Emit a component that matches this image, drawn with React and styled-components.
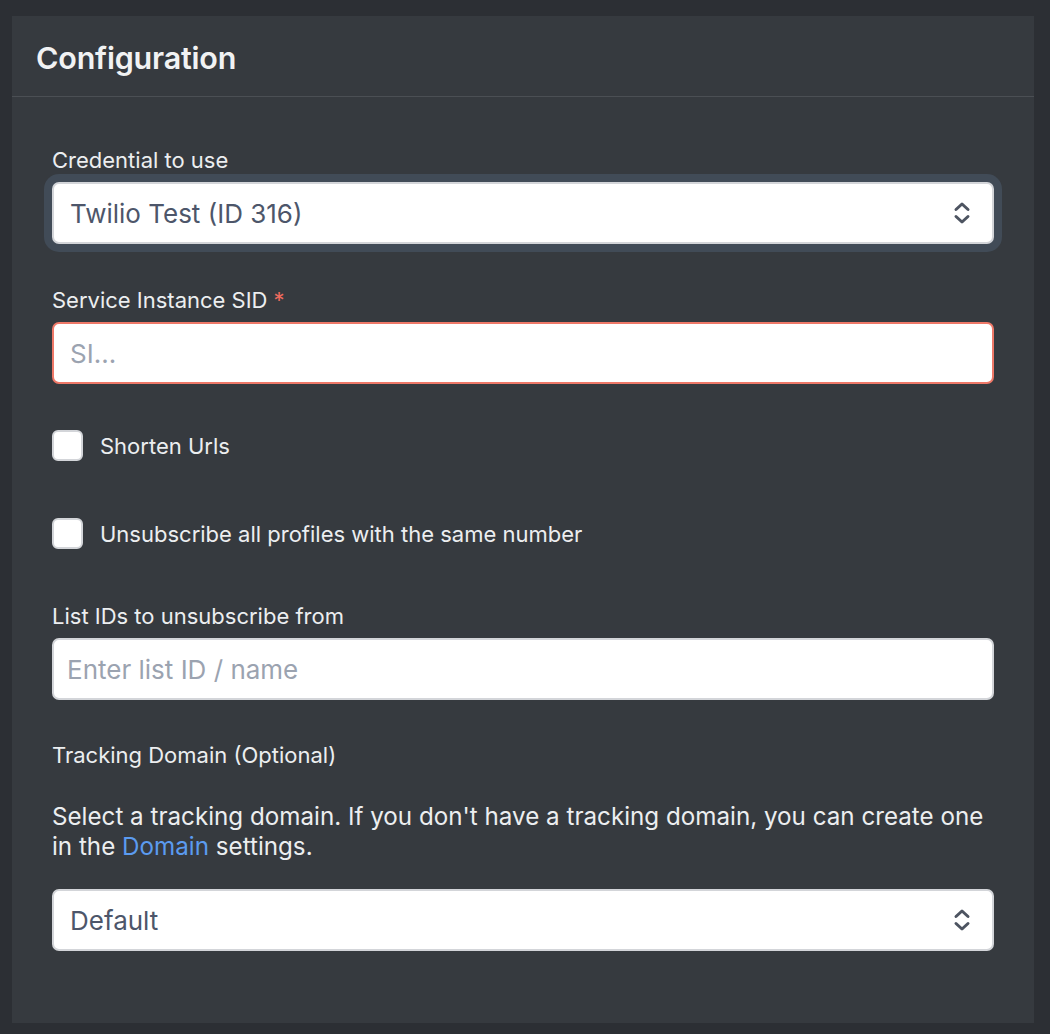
import React from "react";
import styled, { createGlobalStyle } from "styled-components";

const GlobalStyle = createGlobalStyle`
  *, *::before, *::after { box-sizing: border-box; }
  html, body { margin: 0; padding: 0; }
  body {
    background: #2c2f34;
    font-family: Inter, "Open Sans", "Liberation Sans", sans-serif;
    -webkit-font-smoothing: antialiased;
  }
`;

const Page = styled.div`
  padding: 16px 16px 11px 12px;
`;

const Card = styled.section`
  background: #363a3f;
  width: 1022px;
  min-height: 1007px;
`;

const Header = styled.header`
  height: 81px;
  display: flex;
  align-items: center;
  padding: 0 24px;
  border-bottom: 1px solid #4b4f54;
`;

const Title = styled.h2`
  margin: 0;
  color: #f1f2f3;
  font-size: 30.5px;
  font-weight: 600;
  letter-spacing: -0.2px;
  padding-top: 2px;
`;

const Body = styled.div`
  padding: 49px 40px 72px;
`;

const Group = styled.div`
  margin-bottom: ${(p) => p.$mb ?? 42}px;
`;

const Label = styled.label`
  display: block;
  color: #eceef0;
  font-size: 22px;
  line-height: 28px;
  margin-bottom: 8px;
`;

const Required = styled.span`
  color: #ef6b5e;
  margin-left: 6px;
`;

const Field = styled.div`
  position: relative;
  height: 62px;
  background: #fff;
  border: 2px solid ${(p) => (p.$error ? "#ee7868" : "#d3d5d9")};
  border-radius: 7px;
  display: flex;
  align-items: center;
  padding: 0 ${(p) => (p.$select ? 16 : 13)}px;
  box-shadow: ${(p) => (p.$focus ? "0 0 0 8px #414b57" : "none")};
  color: ${(p) => (p.$placeholder ? "#9ba3b0" : "#4d566a")};
  font-size: 26px;
`;

const Value = styled.span`
  flex: 1;
`;

const Chevrons = styled.svg`
  width: 20px;
  height: 26px;
  margin-right: 4px;
`;

const CheckRow = styled.div`
  display: flex;
  align-items: center;
  gap: 17px;
  margin-bottom: ${(p) => p.$mb}px;
`;

const Box = styled.span`
  width: 31px;
  height: 31px;
  border-radius: 6px;
  background: #fff;
  border: 2px solid #d3d5d9;
  flex-shrink: 0;
`;

const CheckText = styled.span`
  color: #eceef0;
  font-size: 22px;
`;

const Help = styled.p`
  margin: 33px 0 27px;
  color: #eceef0;
  font-size: 24.2px;
  line-height: 30px;
`;

const Link = styled.a`
  display: inline-block;
  line-height: 30px;
  color: #5b9bf0;
  text-decoration: none;
`;

function UpDown() {
  return (
    <Chevrons viewBox="0 0 20 26" fill="none" stroke="#4d5461" strokeWidth="3" strokeLinecap="round" strokeLinejoin="round">
      <path d="M4 9.5l6-5.5 6 5.5" />
      <path d="M4 16.5l6 5.5 6-5.5" />
    </Chevrons>
  );
}

function App() {
  return (
    <Page>
      <GlobalStyle />
      <Card>
        <Header>
          <Title>Configuration</Title>
        </Header>
        <Body>
          <Group>
            <Label>Credential to use</Label>
            <Field $select $focus>
              <Value>Twilio Test (ID 316)</Value>
              <UpDown />
            </Field>
          </Group>

          <Group $mb={46}>
            <Label>
              Service Instance SID<Required>*</Required>
            </Label>
            <Field $error $placeholder $select>
              <Value>SI...</Value>
            </Field>
          </Group>

          <CheckRow $mb={57}>
            <Box />
            <CheckText>Shorten Urls</CheckText>
          </CheckRow>
          <CheckRow $mb={53}>
            <Box />
            <CheckText>Unsubscribe all profiles with the same number</CheckText>
          </CheckRow>

          <Group $mb={41}>
            <Label>List IDs to unsubscribe from</Label>
            <Field $placeholder>
              <Value>Enter list ID / name</Value>
            </Field>
          </Group>

          <Label>Tracking Domain (Optional)</Label>
          <Help>
            Select a tracking domain. If you don't have a tracking domain, you can create one in the{" "}
            <Link href="#">Domain</Link> settings.
          </Help>
          <Field $select>
            <Value>Default</Value>
            <UpDown />
          </Field>
        </Body>
      </Card>
    </Page>
  );
}

export default App;
